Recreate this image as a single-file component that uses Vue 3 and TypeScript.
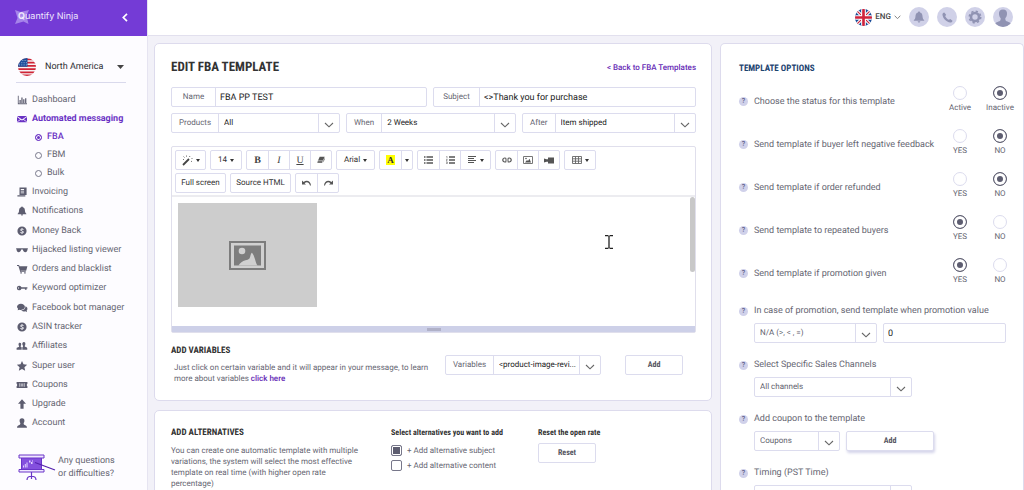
<script setup lang="ts">
import { ref } from 'vue'

interface MenuItem {
  label: string
  icon: string
  children?: string[]
}

const icons: Record<string, string> = {
  chart: 'M1 1h1v9h10v1H1zM3 6h1.500v3.500H3zM5.200 3h1.500v6.500H5.200zM7.400 5h1.500v4.500H7.400zM9.700 4h1.500v5.500H9.700z',
  mail: 'M0 2.500h12L6 6.500zM0 3.500l3.800 2.800L0 9.300zM12 3.500v5.800L8.200 6.300zM4.500 6.800L6 7.800l1.500-1L12 10H0z',
  invoice: 'M3 .5h8.500v9H3zM0.500 10h9.500v1.500H0.500zM4.500 2.500v1h4v-1zM4.500 4.500v1h4v-1zM4.500 6.500v1h4v-1z',
  bell: 'M6 .5c.7 0 1 .4 1 1C9 2 9.500 3.800 9.600 6c.1 1.700.7 2.400 1.600 3.200v.6H.8v-.6C1.700 8.400 2.300 7.700 2.400 6 2.500 3.800 3 2 5 1.500c0-.6.3-1 1-1zM4.700 10.300h2.600c0 1.600-2.600 1.600-2.600 0z',
  money: 'M6 .5a5.500 5.500 0 1 0 0 11 5.500 5.500 0 0 0 0-11zM5.500 2.500h1v.8l1.500.5-.4 1-1.600-.5c-1 0-1 .9-.2 1.200l1.200.4c1.700.7 1.300 2.500-.5 2.800v.8h-1v-.8L3.900 8.200l.4-1 1.600.5c1.200 0 1.200-.9.3-1.200L5 6.100C3.400 5.500 3.700 3.700 5.500 3.300z',
  glasses: 'M-1 3.800h14v1.400h-.4C12.300 7.800 11.500 8.800 10 8.800S7.500 7.800 7 5.500H5C4.500 7.800 3.500 8.800 2 8.800S-.3 7.800-.6 5.200H-1z',
  cart: 'M0 1.300h2.500l.5 1.300H12.500L11 8H4.300l.2.600h6v1H3.900L1.700 2.500H0zM4 9.800h1.800v1.700H4zM8.600 9.800h1.800v1.700H8.600z',
  key: 'M2.800 3.200a2.800 2.800 0 0 1 2.600 1.900H12.500v1.500h-1V8.200H9.500V6.800H5.300A2.800 2.800 0 1 1 2.800 3.200zM1.200 5.500v1.200h1.200V5.500z',
  chat: 'M4.700 .8C7.400.8 9.500 2.500 9.500 4.600S7.400 8.300 4.700 8.300c-.6 0-1.200-.1-1.700-.3L.8 8.700l.5-1.900C.5 6.200 0 5.400 0 4.500 0 2.500 2 .8 4.700.8zM10.200 4c1.400.5 2.300 1.500 2.300 2.900 0 .8-.3 1.500-.9 2l.4 1.900-2.100-.9C7.700 10.500 5.500 9.900 5 9.100 8.300 9 10.300 6.600 10.200 4z',
  people: 'M3.500 2c1.300 0 1.700 1 1.500 2.400-.1.900-.4 1.300-.6 1.700v.8l1.200.7V10.500H-.5V8.600c0-.7 1.500-.9 3-1.700v-.8C2 5.500 1.800 4.800 1.800 4 1.800 2.800 2.300 2 3.500 2zM8.200 1.300c1.400 0 2 1 1.800 2.500-.1.900-.4 1.400-.7 1.800v1c1.600.8 3 1.200 3 2.100V10.500H6.400V7.500L7.200 6.800v-1C6.700 5.300 6.500 4.700 6.400 4c-.1-1.500.4-2.700 1.800-2.700z',
  star: 'M6 .1l1.800 3.900 4.400.5-3.300 3 .9 4.300L6 9.700l-3.800 2.100.9-4.300-3.300-3 4.400-.5z',
  ticket: 'M-.5 2.500h13v2c-1 .3-1 2.700 0 3v2h-13v-2c1-.3 1-2.700 0-3zM3 4v4h.8V4zM8.200 4v4H9V4zM4.600 4.500v1h2.800v-1zM4.600 6.500v1h2.800v-1z',
  up: 'M6 .3l4.800 5.400H7.900v6H4.100v-6H1.200z',
  user: 'M6 .3c2 0 3.100 1.300 2.900 3.300-.1 1.300-.6 2-.9 2.500 0 1.300.1 1.600.7 2 1.500.7 3.300 1.200 3.300 3.500H0c0-2.300 1.800-2.800 3.300-3.500.6-.4.7-.7.7-2-.3-.5-.8-1.200-.9-2.500C2.900 1.600 4 .3 6 .3z',
}

const menu: MenuItem[] = [
  { label: 'Dashboard', icon: 'chart' },
  { label: 'Automated messaging', icon: 'mail', children: ['FBA', 'FBM', 'Bulk'] },
  { label: 'Invoicing', icon: 'invoice' },
  { label: 'Notifications', icon: 'bell' },
  { label: 'Money Back', icon: 'money' },
  { label: 'Hijacked listing viewer', icon: 'glasses' },
  { label: 'Orders and blacklist', icon: 'cart' },
  { label: 'Keyword optimizer', icon: 'key' },
  { label: 'Facebook bot manager', icon: 'chat' },
  { label: 'ASIN tracker', icon: 'money' },
  { label: 'Affiliates', icon: 'people' },
  { label: 'Super user', icon: 'star' },
  { label: 'Coupons', icon: 'ticket' },
  { label: 'Upgrade', icon: 'up' },
  { label: 'Account', icon: 'user' },
]

const filters = [
  { id: 'products', label: 'Products', value: 'All' },
  { id: 'when', label: 'When', value: '2 Weeks' },
  { id: 'after', label: 'After', value: 'Item shipped' },
]

const toggles = ref([
  { id: 'status', text: 'Choose the status for this template', options: ['Active', 'Inactive'], value: 'Inactive' },
  { id: 'negative', text: 'Send template if buyer left negative feedback', options: ['YES', 'NO'], value: 'NO' },
  { id: 'refunded', text: 'Send template if order refunded', options: ['YES', 'NO'], value: 'NO' },
  { id: 'repeated', text: 'Send template to repeated buyers', options: ['YES', 'NO'], value: 'YES' },
  { id: 'promotion', text: 'Send template if promotion given', options: ['YES', 'NO'], value: 'YES' },
])

const name = ref('FBA PP TEST')
const subject = ref('<>Thank you for purchase')
const promotionValue = ref('0')
const altSubject = ref(true)
const altContent = ref(false)
</script>

<template>
  <div class="app">
    <aside class="sidebar">
      <div class="brand">
        <a href="#" class="logo">
          <svg class="logo-star" viewBox="0 0 14 14" aria-hidden="true">
            <path d="M0 0l5.500 2L14 0l-2.500 5.500L13.500 14l-5-2.500L0 14l2.500-6z" fill="#a684ea" />
          </svg>
          <span class="logo-text"><b>Q</b>uantify Ninja</span>
        </a>
        <button class="collapse" aria-label="Collapse menu">
          <svg width="6" height="9" viewBox="0 0 6 9"><path d="M5 .8L1.300 4.500 5 8.200" fill="none" stroke="#fff" stroke-width="1.700" /></svg>
        </button>
      </div>
      <button class="region">
        <svg class="flag" viewBox="0 0 18 18" aria-hidden="true">
          <clipPath id="us"><circle cx="9" cy="9" r="9" /></clipPath>
          <g clip-path="url(#us)">
            <path d="M0 0h18v18H0z" fill="#f6f3f5" />
            <path d="M0 1.300h18M0 4.600h18M0 7.800h18M0 11.100h18M0 14.300h18M0 17.300h18" stroke="#cf2436" stroke-width="1.700" />
            <path d="M0 0h9.500v8.700H0z" fill="#1d4f9c" />
            <path d="M2 2.500h7M1 4.700h8M1 6.900h8" stroke="#b9cbe6" stroke-width=".8" stroke-dasharray="1 1.300" />
          </g>
        </svg>
        <span>North America</span>
        <svg class="region-caret" width="7" height="4" viewBox="0 0 7 4"><path d="M0 0h7L3.500 4z" fill="#444" /></svg>
      </button>
      <nav class="nav">
        <ul class="menu">
          <li v-for="item in menu" :key="item.label">
            <a href="#" class="menu-link" :class="{ active: item.children }">
              <svg class="menu-icon" viewBox="0 0 12 12" aria-hidden="true"><path :d="icons[item.icon]" fill="currentColor" fill-rule="evenodd" /></svg>
              {{ item.label }}
            </a>
            <ul v-if="item.children" class="submenu">
              <li v-for="(child, i) in item.children" :key="child">
                <a href="#" :class="{ current: i === 0 }"><span class="bullet"></span>{{ child }}</a>
              </li>
            </ul>
          </li>
        </ul>
      </nav>
      <a href="#" class="help-link">
        <svg width="38" height="27" viewBox="0 0 38 27" aria-hidden="true">
          <path d="M3.500 4h20v12h-20z" fill="#8450de" />
          <path d="M1 1h25v3H1zM1 15.500h25V18H1z" fill="#f0e8ff" stroke="#6a35c8" stroke-width="1" />
          <path d="M3.500 4v11.500M23.500 4v11.500" stroke="#6a35c8" />
          <path d="M5 13.500v-2h1v2zM6.800 13.500v-3.500h1v3.500zM8.500 13.500v-5h1v5zM11 6.500h1.500v2H11zM13 8h1.500v2H13zM14 6.500h1v1h-1z" fill="#e4d5ff" />
          <path d="M17 8.500l20 7.500" fill="none" stroke="#5420ad" stroke-width="1.200" />
          <path d="M13.500 18v4M9 26c0-5 9-5 9 0M13.500 22v3" fill="none" stroke="#6a35c8" stroke-width="1.200" />
        </svg>
        <span>Any questions<br />or difficulties?</span>
      </a>
    </aside>

    <div class="page">
      <header class="topbar">
        <button class="language">
          <svg class="flag small" viewBox="0 0 18 18" aria-hidden="true">
            <clipPath id="uk"><circle cx="9" cy="9" r="9" /></clipPath>
            <g clip-path="url(#uk)">
              <path d="M0 0h18v18H0z" fill="#174a97" />
              <path d="M0 0l18 18M18 0L0 18" stroke="#fff" stroke-width="3.400" />
              <path d="M0 0l18 18M18 0L0 18" stroke="#d0233c" stroke-width="1.200" />
              <path d="M9 0v18M0 9h18" stroke="#fff" stroke-width="5" />
              <path d="M9 0v18M0 9h18" stroke="#d0233c" stroke-width="2.800" />
            </g>
          </svg>
          <span>ENG</span>
          <svg width="7" height="5" viewBox="0 0 7 5"><path d="M.7.700L3.500 3.700 6.300.7" fill="none" stroke="#888" /></svg>
        </button>
        <button class="round" aria-label="Notifications">
          <svg width="12" height="12" viewBox="0 0 12 12"><path :d="icons.bell" fill="#9093b3" /></svg>
        </button>
        <button class="round" aria-label="Phone">
          <svg width="11" height="11" viewBox="0 0 12 12"><path d="M2.500.5l2 2.500-1 1.500c.8 1.700 2.200 3.100 4 4l1.500-1 2.500 2c-.3 1.300-1.200 2.200-2.500 2C4.500 10.800 1 7 .5 3 .4 1.700 1.200.8 2.500.5z" fill="#9093b3" /></svg>
        </button>
        <button class="round" aria-label="Settings">
          <svg width="14" height="14" viewBox="0 0 14 14"><circle cx="7" cy="7" r="4" fill="none" stroke="#9093b3" stroke-width="2.600" /><circle cx="7" cy="7" r="5.700" fill="none" stroke="#9093b3" stroke-width="1.600" stroke-dasharray="2.240 2.240" /></svg>
        </button>
        <button class="round avatar" aria-label="Profile">
          <svg width="20" height="20" viewBox="0 0 20 20">
            <clipPath id="face"><circle cx="10" cy="10" r="10" /></clipPath>
            <path clip-path="url(#face)" d="M10 2.500c3 0 4.300 2 4 4.800-.2 2-.9 3.200-1.700 4 0 1.700.2 2.400 1.300 2.900 2.400.9 5.400 1.600 5.400 5.800H1c0-4.200 3-4.900 5.400-5.800 1.100-.5 1.300-1.200 1.300-2.900-.8-.8-1.500-2-1.700-4-.3-2.800 1-4.800 4-4.800z" fill="#9093b3" />
          </svg>
        </button>
      </header>

      <div class="content">
        <main class="main">
          <section class="card editor-card">
            <div class="card-head">
              <h1>EDIT FBA TEMPLATE</h1>
              <a href="#">&lt; Back to FBA Templates</a>
            </div>
            <div class="row two">
              <div class="field">
                <label for="name" class="w44">Name</label>
                <input id="name" v-model="name" type="text" />
              </div>
              <div class="field">
                <label for="subject" class="w46">Subject</label>
                <input id="subject" v-model="subject" type="text" />
              </div>
            </div>
            <div class="row three">
              <div v-for="f in filters" :key="f.id" class="field">
                <label :for="f.id">{{ f.label }}</label>
                <select :id="f.id"><option>{{ f.value }}</option></select>
                <span class="arrow"><svg viewBox="0 0 10 6"><path d="M1 1l4 3.800L9 1" /></svg></span>
              </div>
            </div>

            <div class="editor">
              <div class="toolbar">
                <div class="tools">
                  <div class="group">
                    <button class="w29" aria-label="Style">
                      <svg width="11" height="11" viewBox="0 0 11 11"><path d="M1 10l6-6" stroke="#444" stroke-width="1.800" /><path d="M1.500 1.500l1 1M4.500.5v1.200M8 1l-.6 1M9.500 3.500h1M9 6l1 .8M1 4.500h1" stroke="#777" /></svg>
                      <i class="caret"></i>
                    </button>
                  </div>
                  <div class="group"><button class="w30">14 <i class="caret"></i></button></div>
                  <div class="group">
                    <button class="w21 serif bold" aria-label="Bold">B</button>
                    <button class="w21 serif italic" aria-label="Italic">I</button>
                    <button class="w21 serif under" aria-label="Underline">U</button>
                    <button class="w21" aria-label="Clear formatting">
                      <svg width="8" height="8" viewBox="0 0 8 8"><path d="M2.700.8h5L6 4.500H1z" fill="#555" /><path d="M.8 4.800h5L5 7H.3zM6.300 4.500L7.700 1.500v2.200L5.600 7z" fill="#777" /></svg>
                    </button>
                  </div>
                  <div class="group"><button class="w37">Arial <i class="caret"></i></button></div>
                  <div class="group">
                    <button class="w21" aria-label="Text colour"><span class="mark">A</span></button>
                    <button class="w11" aria-label="More colours"><i class="caret"></i></button>
                  </div>
                  <div class="group">
                    <button class="w21" aria-label="Bulleted list">
                      <svg width="9" height="8" viewBox="0 0 9 8"><path d="M0 1h1.500M0 4h1.500M0 7h1.500M2.500 1H9M2.500 4H9M2.500 7H9" stroke="#555" stroke-width="1.300" /></svg>
                    </button>
                    <button class="w21" aria-label="Numbered list">
                      <svg width="9" height="8" viewBox="0 0 9 8"><path d="M3 1h6M3 4h6M3 7h6" stroke="#555" stroke-width="1.300" /><path d="M.3.300h.7v2M0 3.400h1.300L.2 4.800h1.300M0 6h1.300v1.700H0M.5 6.900h.8" fill="none" stroke="#666" stroke-width=".6" /></svg>
                    </button>
                    <button class="w30" aria-label="Paragraph">
                      <svg width="9" height="8" viewBox="0 0 9 8"><path d="M0 .5h8M0 2.500h6M0 4.500h8M0 6.500h6" stroke="#555" /></svg>
                      <i class="caret"></i>
                    </button>
                  </div>
                  <div class="group">
                    <button class="w21" aria-label="Link">
                      <svg width="10" height="6" viewBox="0 0 10 6"><path d="M4.300 1.600C4 1.200 3.500 1 2.800 1a2 2 0 0 0 0 4c.7 0 1.200-.2 1.500-.6M5.700 1.600C6 1.200 6.500 1 7.200 1a2 2 0 0 1 0 4c-.7 0-1.200-.2-1.500-.6M3 3h4" fill="none" stroke="#555" stroke-width="1.200" /></svg>
                    </button>
                    <button class="w21" aria-label="Picture">
                      <svg width="10" height="8" viewBox="0 0 10 8"><path d="M.5.500h9v7h-9z" fill="none" stroke="#777" /><path d="M2 6.500l2-2.500 1 1 1.500-2.300L8 6.500z" fill="#555" /><circle cx="3" cy="2.500" r=".8" fill="#555" /></svg>
                    </button>
                    <button class="w21" aria-label="Video">
                      <svg width="10" height="7" viewBox="0 0 10 7"><path d="M4 .5h6v6H4zM0 1.500l2.500.8H4v2.400H2.500L0 5.500z" fill="#555" /></svg>
                    </button>
                  </div>
                  <div class="group">
                    <button class="w30" aria-label="Table">
                      <svg width="10" height="8" viewBox="0 0 10 8"><path d="M.5.500h9v7h-9zM.5 2.800h9M.5 5.200h9M3.500.5v7M6.500.5v7" fill="none" stroke="#666" stroke-width=".9" /></svg>
                      <i class="caret"></i>
                    </button>
                  </div>
                </div>
                <div class="tools">
                  <div class="group"><button class="w49">Full screen</button></div>
                  <div class="group"><button class="w59">Source HTML</button></div>
                  <div class="group">
                    <button class="w21" aria-label="Undo">
                      <svg width="9" height="6" viewBox="0 0 9 6"><path d="M0 .5v4h4L2.600 3.200C4.500 1.500 7 2 8 5.500h1C8.700 1.500 5-.8 1.600 2z" fill="#555" /></svg>
                    </button>
                    <button class="w21" aria-label="Redo">
                      <svg width="9" height="6" viewBox="0 0 9 6"><path d="M9 .5v4H5l1.400-1.300C4.500 1.500 2 2 1 5.500H0C.3 1.500 4-.8 7.400 2z" fill="#555" /></svg>
                    </button>
                  </div>
                </div>
              </div>
              <div class="canvas">
                <div class="placeholder">
                  <svg width="37" height="29" viewBox="0 0 37 29" aria-hidden="true">
                    <path d="M1 1h35v27H1z" fill="#d0d0d0" stroke="#7d7d7d" stroke-width="2" />
                    <path d="M5 4.500h27v20H5z" fill="#7d7d7d" />
                    <circle cx="13" cy="10" r="3.300" fill="#d0d0d0" />
                    <path d="M9.500 24.500c1.500-2.500 4-4.500 7-5.200 3.500-.8 4.200-1.500 4.800-4 .4-1.800 1-3.500 1.700-3.500 1.500 1.700 2.500 4.500 3.300 7.500.6 2.200 1.200 4 2.200 5.200z" fill="#d0d0d0" />
                  </svg>
                </div>
                <span class="scroll-thumb"></span>
                <svg class="ibeam" viewBox="0 0 8 14" aria-hidden="true"><path d="M0 .5h3.500M4.500.5H8M4 1v12M0 13.500h3.500M4.500 13.500H8" fill="none" stroke="#222" stroke-width="1.300" /></svg>
              </div>
              <div class="resize"><span></span></div>
            </div>

            <div class="variables">
              <div class="variables-text">
                <h2>ADD VARIABLES</h2>
                <p>Just click on certain variable and it will appear in your message, to learn more about variables <a href="#">click here</a></p>
              </div>
              <div class="field variables-field">
                <label for="variables" class="w48">Variables</label>
                <select id="variables"><option>&lt;product-image-revi...</option></select>
                <span class="arrow"><svg viewBox="0 0 10 6"><path d="M1 1l4 3.800L9 1" /></svg></span>
              </div>
              <button class="btn">Add</button>
            </div>
          </section>

          <section class="card alternatives">
            <div class="alt-text">
              <h2>ADD ALTERNATIVES</h2>
              <p>You can create one automatic template with multiple variations, the system will select the most effective template on real time (with higher open rate percentage)</p>
            </div>
            <div class="alt-options">
              <h3>Select alternatives you want to add</h3>
              <label class="check"><input v-model="altSubject" type="checkbox" />+ Add alternative subject</label>
              <label class="check"><input v-model="altContent" type="checkbox" />+ Add alternative content</label>
            </div>
            <div class="alt-reset">
              <h3>Reset the open rate</h3>
              <button class="btn">Reset</button>
            </div>
          </section>
        </main>

        <aside class="card options">
          <h2>TEMPLATE OPTIONS</h2>
          <div v-for="t in toggles" :key="t.id" class="toggle" role="radiogroup" :aria-label="t.text">
            <span class="help">?</span>
            <span class="toggle-text">{{ t.text }}</span>
            <label v-for="o in t.options" :key="o" class="radio">
              <input v-model="t.value" type="radio" :name="t.id" :value="o" />{{ o }}
            </label>
          </div>

          <div class="option">
            <label for="promo"><span class="help">?</span>In case of promotion, send template when promotion value</label>
            <div class="option-row">
              <div class="field half">
                <select id="promo"><option>N/A (&gt;, &lt; , =)</option></select>
                <span class="arrow"><svg viewBox="0 0 10 6"><path d="M1 1l4 3.800L9 1" /></svg></span>
              </div>
              <div class="field half"><input v-model="promotionValue" type="text" aria-label="Promotion value" /></div>
            </div>
          </div>
          <div class="option">
            <label for="channels"><span class="help">?</span>Select Specific Sales Channels</label>
            <div class="option-row">
              <div class="field wide">
                <select id="channels"><option>All channels</option></select>
                <span class="arrow"><svg viewBox="0 0 10 6"><path d="M1 1l4 3.800L9 1" /></svg></span>
              </div>
            </div>
          </div>
          <div class="option">
            <label for="coupons"><span class="help">?</span>Add coupon to the template</label>
            <div class="option-row">
              <div class="field narrow">
                <select id="coupons"><option>Coupons</option></select>
                <span class="arrow"><svg viewBox="0 0 10 6"><path d="M1 1l4 3.800L9 1" /></svg></span>
              </div>
              <button class="btn raised">Add</button>
            </div>
          </div>
          <div class="option">
            <label for="timing"><span class="help">?</span>Timing (PST Time)</label>
            <div class="option-row">
              <div class="field wide">
                <select id="timing"><option></option></select>
                <span class="arrow"><svg viewBox="0 0 10 6"><path d="M1 1l4 3.800L9 1" /></svg></span>
              </div>
            </div>
          </div>
        </aside>
      </div>
    </div>
  </div>
</template>

<style>
body {
  margin: 0;
}
</style>

<style scoped>
* {
  box-sizing: border-box;
}
.app {
  display: flex;
  height: 100vh;
  overflow: hidden;
  background: #f2f1f8;
  color: #666672;
  font: 9px/12px Roboto, "Liberation Sans", sans-serif;
  text-rendering: geometricPrecision;
}
button,
input,
select {
  font: inherit;
  color: inherit;
  text-rendering: inherit;
  margin: 0;
  padding: 0;
  border: 0;
  background: none;
  outline: none;
}
a {
  color: inherit;
  text-decoration: none;
}
h1, h2, h3, p, ul {
  margin: 0;
  padding: 0;
}
ul {
  list-style: none;
}
h1, h2, h3 {
  color: #333;
  font-family: "Roboto Condensed", "Liberation Sans Narrow", Roboto, sans-serif;
}
h1 {
  font-size: 13px;
  line-height: 16px;
}
h2 {
  font-size: 9px;
  line-height: 12px;
}
h3 {
  font-size: 8px;
  line-height: 12px;
}

/* Sidebar */
.sidebar {
  display: flex;
  flex-direction: column;
  flex: 0 0 148px;
  background: #fdfcff;
  border-right: 1px solid #e6e4f1;
}
.brand {
  display: flex;
  align-items: center;
  justify-content: space-between;
  height: 36px;
  flex: none;
  padding: 0 19px 2px 15px;
  background: #743bd6;
}
.logo {
  display: flex;
  align-items: center;
  color: #f1eafd;
}
.logo-star {
  width: 14px;
  height: 14px;
}
.logo-text {
  position: relative;
  margin-left: -11px;
  font: 400 9px/14px Inter, "Open Sans", sans-serif;
}
.collapse {
  display: flex;
}
.region {
  display: flex;
  align-items: center;
  height: 32px;
  flex: none;
  margin: 15px 21px 0 16px;
  padding: 0 2px;
  border-bottom: 1px solid #d9d9ec;
  color: #2e2e33;
}
.region span {
  margin-left: 9px;
}
.region-caret {
  margin-left: auto;
}
.flag {
  width: 18px;
  height: 18px;
}
.nav {
  display: flex;
  flex: 1;
  padding: 7px 0 21px;
}
.menu {
  display: flex;
  flex-direction: column;
  justify-content: space-between;
  flex: 1;
}
.menu-link {
  display: flex;
  align-items: center;
  height: 19px;
  padding-left: 17px;
  gap: 5px;
  white-space: nowrap;
}
.menu-link.active {
  color: #6a32c4;
  font-weight: 700;
}
.menu-icon {
  width: 10px;
  height: 10px;
  color: #5d5d70;
  overflow: visible;
}
.active .menu-icon {
  color: #6a32c4;
}
.submenu a {
  display: flex;
  align-items: center;
  height: 18px;
  padding-left: 35px;
  gap: 5px;
}
.submenu a.current {
  color: #6a32c4;
  font-weight: 500;
}
.bullet {
  width: 7px;
  height: 7px;
  border: 1px solid #77778a;
  border-radius: 50%;
}
.current .bullet {
  border-color: #6a32c4;
  background: #6a32c4;
  box-shadow: inset 0 0 0 1px #fff;
}
.help-link {
  display: flex;
  align-items: center;
  flex: none;
  gap: 2px;
  padding: 0 0 9px 18px;
  line-height: 13px;
}

/* Top bar */
.page {
  display: flex;
  flex-direction: column;
  flex: 1;
  min-width: 0;
}
.topbar {
  display: flex;
  align-items: center;
  justify-content: flex-end;
  flex: none;
  gap: 8px;
  height: 36px;
  padding: 0 11px 1px 0;
  background: #fff;
  border-bottom: 1px solid #e2e0ee;
}
.language {
  display: flex;
  align-items: center;
  gap: 3px;
  font-size: 8px;
  font-weight: 500;
  color: #444;
}
.flag.small {
  width: 17px;
  height: 17px;
}
.round {
  display: flex;
  align-items: center;
  justify-content: center;
  width: 20px;
  height: 20px;
  border-radius: 50%;
  background: #d0d1e8;
}

/* Layout */
.content {
  display: flex;
  flex: 1;
  gap: 8px;
  min-height: 0;
  padding: 7px 0 0 6px;
}
.main {
  display: flex;
  flex-direction: column;
  flex: 1;
  gap: 9px;
  min-width: 0;
}
.card {
  background: #fff;
  border: 1px solid #dddbed;
  border-radius: 5px;
}
.editor-card {
  padding: 16px 15px 16px 16px;
}
.card-head {
  display: flex;
  align-items: center;
  justify-content: space-between;
  margin-bottom: 11px;
}
.card-head a,
p a {
  color: #6529b5;
  font-weight: 500;
}
.card-head a {
  font-size: 8px;
}
.row {
  display: grid;
  gap: 6px;
  margin-bottom: 6px;
}
.row.two {
  grid-template-columns: 256fr 263fr;
}
.row.three {
  grid-template-columns: 169fr 170fr 174fr;
}

/* Fields */
.field {
  display: flex;
  height: 20px;
  min-width: 0;
  border: 1px solid #dcdcee;
  border-radius: 2px;
  background: #fff;
  font-size: 8px;
}
.field label {
  display: flex;
  align-items: center;
  justify-content: center;
  flex: none;
  padding: 0 7px;
  border-right: 1px solid #dcdcee;
}
.field input {
  flex: 1;
  min-width: 0;
  padding: 1px 4px 0;
  color: #222;
  font-size: 9px;
}
.field select {
  appearance: none;
  flex: 1;
  min-width: 0;
  padding: 0 0 0 5px;
  color: #222;
}
.arrow {
  display: flex;
  align-items: center;
  justify-content: center;
  flex: 0 0 21px;
  border-left: 1px solid #dcdcee;
  pointer-events: none;
}
.arrow svg {
  width: 10px;
  height: 6px;
  margin-top: 3px;
  fill: none;
  stroke: #666;
  stroke-width: 1.1;
}
.btn {
  width: 58px;
  height: 20px;
  border: 1px solid #dcdcee;
  border-radius: 2px;
  background: #fff;
  color: #555560;
  font: 700 8px/12px "Roboto Condensed", "Liberation Sans Narrow", Roboto, sans-serif;
}

/* Editor */
.editor {
  margin-top: 13px;
  border: 1px solid #e0dfec;
  border-radius: 2px;
}
.toolbar {
  display: flex;
  flex-direction: column;
  gap: 3px;
  padding: 3px 3px 2px;
  border-bottom: 2px solid #ececf0;
}
.tools {
  display: flex;
  gap: 4px;
}
.group {
  display: flex;
  border: 1px solid #dcdcee;
  border-radius: 2px;
  color: #333;
  font-size: 8px;
}
.group button {
  display: flex;
  align-items: center;
  justify-content: center;
  gap: 3px;
  height: 18px;
}
.group button + button {
  border-left: 1px solid #dcdcee;
}
.group .serif {
  padding-top: 1px;
  font: 10px/12px "Liberation Serif", serif;
  color: #444;
}
.group .bold {
  font-weight: 700;
}
.group .italic {
  font-style: italic;
}
.group .under {
  text-decoration: underline;
}
.mark {
  padding: 0 1px;
  background: #ff0;
  font: 700 9px/10px "Liberation Serif", serif;
}
.caret {
  border: 2px solid transparent;
  border-top: 3px solid #333;
  border-bottom: 0;
}
.w11 { width: 11px; }
.w21 { width: 21px; }
.w29 { width: 29px; }
.w30 { width: 30px; }
.w37 { width: 37px; }
.w44 { width: 44px; }
.w46 { width: 46px; }
.w48 { width: 48px; }
.w49 { width: 49px; }
.w59 { width: 59px; }
.canvas {
  position: relative;
  padding: 6px 6px 19px;
}
.placeholder {
  display: flex;
  align-items: center;
  justify-content: center;
  width: 139px;
  height: 104px;
  background: #cdcdcd;
}
.scroll-thumb {
  position: absolute;
  top: 0;
  right: 0;
  width: 5px;
  height: 75px;
  border-radius: 3px;
  background: #c8c8c8;
}
.ibeam {
  position: absolute;
  top: 38px;
  right: 82px;
  width: 8px;
  height: 14px;
}
.resize {
  display: flex;
  align-items: center;
  justify-content: center;
  height: 6px;
  background: #cdd0e8;
}
.resize span {
  width: 14px;
  height: 3px;
  background: #b0b1c8;
}

/* Variables */
.variables {
  display: flex;
  align-items: flex-start;
  margin-top: 12px;
  padding-right: 13px;
}
.variables-text {
  flex: 1;
}
.variables-text p {
  padding: 5px 12px 0 3px;
}
p {
  font-size: 8px;
  line-height: 11px;
}
.variables-field {
  width: 156px;
  margin: 10px 24px 0 0;
}
.variables .btn {
  margin-top: 10px;
}

/* Alternatives */
.alternatives {
  display: flex;
  flex: 1 0 auto;
  padding: 16px;
}
.alt-text {
  flex: 0 1 220px;
}
.alt-text p {
  padding: 6px 32px 0 0;
}
.alt-options {
  flex: 0 0 147px;
}
.alt-reset .btn {
  margin-top: 4px;
}
.check {
  display: flex;
  align-items: center;
  gap: 5px;
  margin-bottom: 4px;
  font-size: 8px;
  line-height: 10px;
}
h3 + .check {
  margin-top: 6px;
}
.check input {
  appearance: none;
  width: 11px;
  height: 11px;
  border: 1px solid #77778a;
  border-radius: 2px;
}
.check input:checked {
  background: #5d5d70;
  box-shadow: inset 0 0 0 1px #fff;
}

/* Options */
.options {
  flex: 0 0 304px;
  padding: 19px 3px 0 18px;
  border-bottom: 0;
  border-radius: 5px 5px 0 0;
  overflow: hidden;
}
.options h2 {
  margin-bottom: 5px;
  color: #1d4470;
}
.toggle {
  display: flex;
  align-items: center;
  height: 43px;
}
.toggle-text {
  flex: 1;
  white-space: nowrap;
}
.help {
  display: inline-flex;
  align-items: center;
  justify-content: center;
  width: 9px;
  height: 9px;
  margin-right: 6px;
  border-radius: 50%;
  background: #d0d1ea;
  color: #62628a;
  font-size: 7px;
  font-weight: 500;
  line-height: 9px;
}
.radio {
  display: flex;
  flex-direction: column;
  align-items: center;
  gap: 2px;
  width: 40px;
  padding-bottom: 3px;
  font-size: 8px;
}
.radio input {
  appearance: none;
  width: 14px;
  height: 14px;
  border: 1px solid #dcdcee;
  border-radius: 50%;
}
.radio input:checked {
  border-color: #5d5d70;
  background: #5d5d70;
  box-shadow: inset 0 0 0 3px #fff;
}
.option {
  height: 54px;
}
.toggle + .option {
  margin-top: 10px;
}
.option > label {
  display: flex;
  align-items: center;
}
.option-row {
  display: flex;
  gap: 6px;
  padding: 6px 14px 0 15px;
}
.options select {
  color: #62626e;
}
.half {
  flex: 1;
}
.wide {
  width: 158px;
}
.narrow {
  width: 86px;
}
.raised {
  width: 88px;
  box-shadow: 1px 2px 3px #d4d4ea;
}
</style>
